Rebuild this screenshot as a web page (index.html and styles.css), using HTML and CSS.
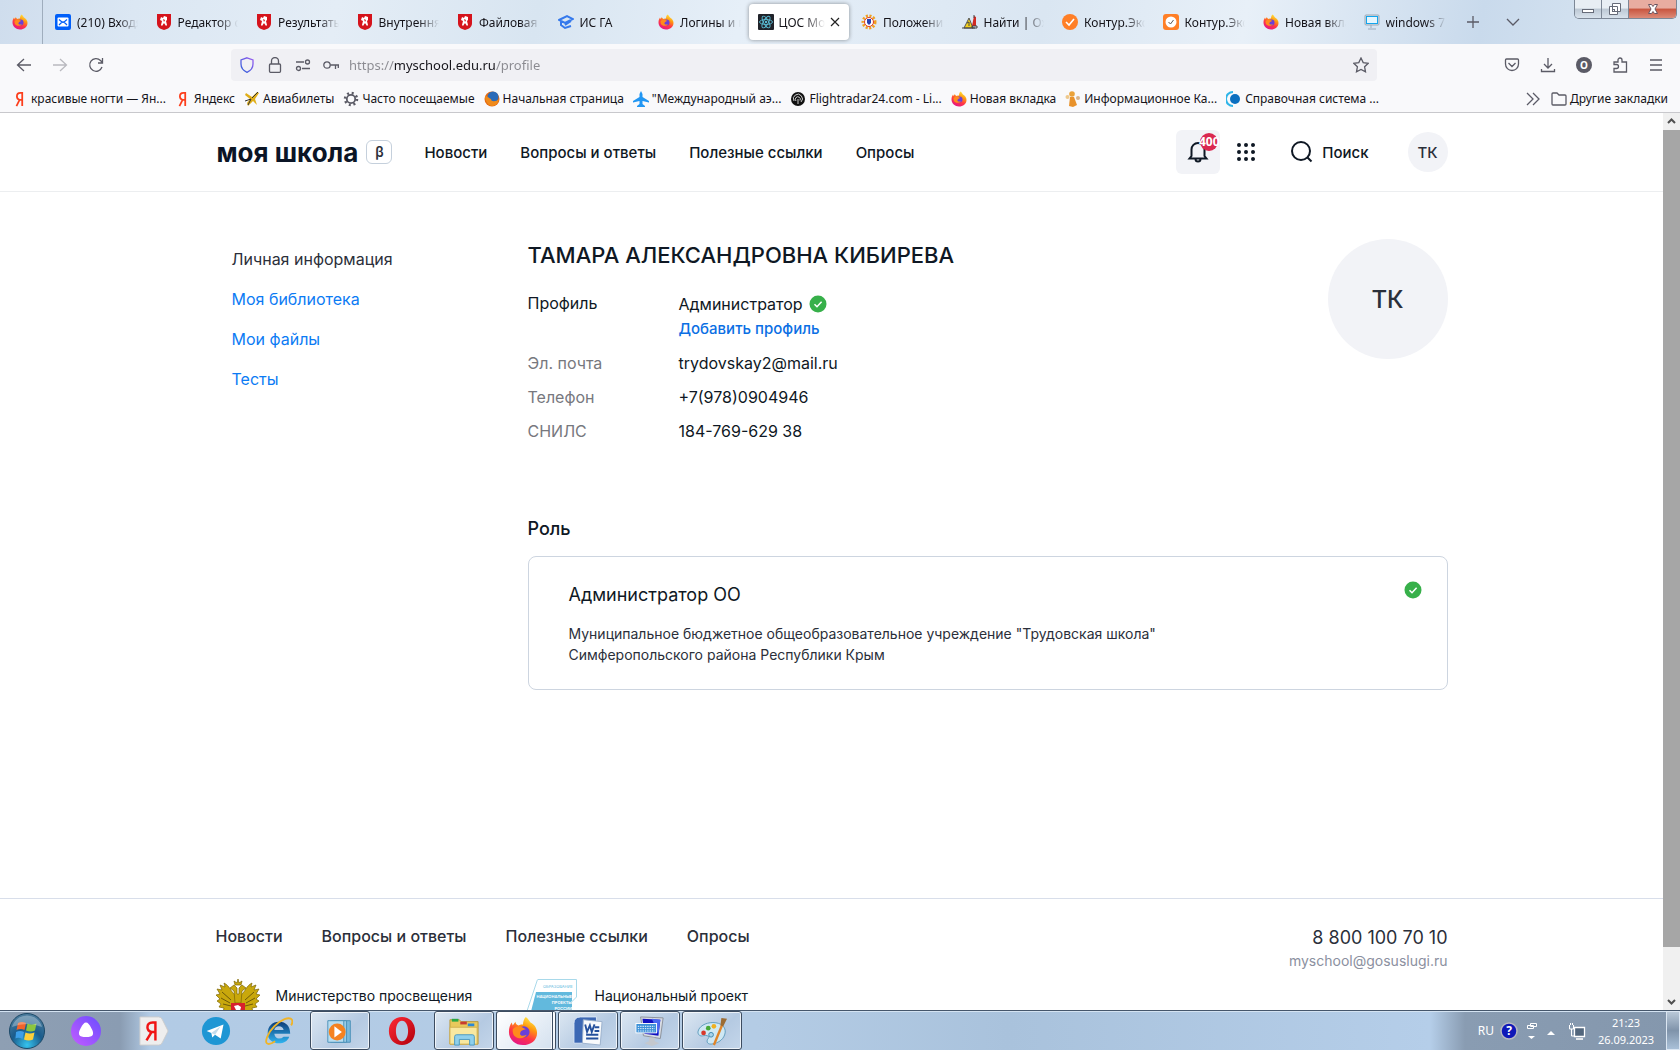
FILE: index.html
```html
<!DOCTYPE html>
<html lang="ru">
<head>
    <meta charset="UTF-8">
    <meta name="viewport" content="width=device-width, initial-scale=1.0">
    <title>ЦОС Моя школа</title>
    <link rel="stylesheet" href="styles.css">
</head>
<body>
    <!-- Icons -->
    <svg class="sprite" aria-hidden="true">
        <defs>
            <linearGradient id="fxBody" x1="0.8" y1="0" x2="0.3" y2="1">
                <stop offset="0" stop-color="#fff44f"/>
                <stop offset="0.35" stop-color="#ff980e"/>
                <stop offset="0.65" stop-color="#ff3647"/>
                <stop offset="1" stop-color="#e31587"/>
            </linearGradient>
            <linearGradient id="ieBody" x1="0" y1="0" x2="0" y2="1">
                <stop offset="0" stop-color="#0c3a78"/>
                <stop offset="1" stop-color="#2fb4ef"/>
            </linearGradient>
            <radialGradient id="orb" cx="0.5" cy="0.9" r="0.9">
                <stop offset="0" stop-color="#35c3ee"/>
                <stop offset="0.5" stop-color="#1a5c8c"/>
                <stop offset="1" stop-color="#4f7f9f"/>
            </radialGradient>
            <linearGradient id="alice" x1="0" y1="1" x2="1" y2="0">
                <stop offset="0" stop-color="#c45cff"/>
                <stop offset="1" stop-color="#6a4dff"/>
            </linearGradient>
            <linearGradient id="shieldLine" x1="0" y1="1" x2="1" y2="0">
                <stop offset="0" stop-color="#2a5fd8"/>
                <stop offset="1" stop-color="#9a5cf0"/>
            </linearGradient>
            <linearGradient id="operaRed" x1="0" y1="0" x2="1" y2="1">
                <stop offset="0" stop-color="#ff2a36"/>
                <stop offset="1" stop-color="#b0000c"/>
            </linearGradient>
        </defs>
        <symbol id="firefox" viewBox="0 0 32 32">
            <path d="M19 1c3 2 4 5 5 6 4 2 7 6 7 11 0 8-7 13-15 13S1 25 1 17c0-4 1-7 3-10l1 3 3-4c0 2 1 3 3 4 2-1 4-1 5-1 0-3 1-6 3-8z" fill="url(#fxBody)"/>
            <circle cx="17" cy="17" r="6" fill="#6a3fd8"/>
            <path d="M5 14c3-3 7-4 10-2l4 2c-3 1-5 1-6 4-1 3 3 4 7 2-2 4-8 5-12 2-3-2-3-5-3-8z" fill="#ff8a1c"/>
        </symbol>
        <symbol id="crest" viewBox="1 1 14 16">
            <path d="M1 1h14v9c0 4-3 6-7 7-4-1-7-3-7-7z" fill="#d5131c"/>
            <path d="M5 4l2 1 1-2 3 1v3l-1 1 1 4-1 1-2-3-2 3-1-1 1-4-2-1z" fill="#fff"/>
            <path d="M7 6l2 1-1 2z" fill="#d5131c"/>
        </symbol>
        <symbol id="yandex" viewBox="0 0 16 18">
            <path d="M10.500 17V2H8.500C6 2 4.500 3.500 4.500 6s1 3.500 3 4L4 17M7.500 10h3" fill="none" stroke="#fc3f1d" stroke-width="2"/>
        </symbol>
        <symbol id="check" viewBox="0 0 18 18">
            <circle cx="9" cy="9" r="8.500" fill="#37b04a"/>
            <path d="M5.500 9.200l2.500 2.500 4.600-5" fill="none" stroke="#fff" stroke-width="1.500"/>
        </symbol>
    </svg>

    <header class="browser">
        <div class="tab-strip">
            <button class="pinned-tab" aria-label="Firefox"><svg class="icon"><use href="#firefox"/></svg></button>
            <nav class="tabs">
                <button class="tab"><svg class="icon" viewBox="0 0 16 16"><rect width="16" height="16" rx="2" fill="#005ff9"/><rect x="2.500" y="3.500" width="11" height="9" rx="1" fill="#fff"/><path d="M4 5.500l3 2.500-3 3M12 5.500L9 8l3 3M6 9q2-2 4 0" fill="none" stroke="#005ff9" stroke-width="1.200"/></svg><span>(210) Входя</span></button>
                <button class="tab"><svg class="icon"><use href="#crest"/></svg><span>Редактор с</span></button>
                <button class="tab"><svg class="icon"><use href="#crest"/></svg><span>Результаты</span></button>
                <button class="tab"><svg class="icon"><use href="#crest"/></svg><span>Внутрення</span></button>
                <button class="tab"><svg class="icon"><use href="#crest"/></svg><span>Файловая с</span></button>
                <button class="tab"><svg class="icon" viewBox="0 0 16 16" fill="none" stroke="#3579ec" stroke-width="2"><path d="M1 6l8-4 6 3-8 4zM3 7v4l4 3 6-2M13 7l-6 4"/></svg><span>ИС ГА</span></button>
                <button class="tab"><svg class="icon"><use href="#firefox"/></svg><span>Логины и п</span></button>
                <button class="tab active"><svg class="icon" viewBox="0 0 16 16"><rect width="16" height="16" rx="1" fill="#20232a"/><g fill="none" stroke="#5bbdd5" stroke-width="0.900"><ellipse cx="8" cy="8" rx="6.500" ry="2.500"/><ellipse cx="8" cy="8" rx="6.500" ry="2.500" transform="rotate(60 8 8)"/><ellipse cx="8" cy="8" rx="6.500" ry="2.500" transform="rotate(120 8 8)"/></g><circle cx="8" cy="8" r="1.200" fill="#5bbdd5"/></svg><span>ЦОС Мо</span><svg class="close" viewBox="0 0 10 10"><path d="M1 1l8 8M9 1L1 9" stroke="#222" stroke-width="1.200"/></svg></button>
                <button class="tab"><svg class="icon" viewBox="0 0 16 16"><circle cx="8" cy="8" r="6" fill="none" stroke="#f0a020" stroke-width="3" stroke-dasharray="2 1.500"/><circle cx="8" cy="8" r="4.500" fill="#fff" stroke="#e03a20"/><path d="M6 5h4v4l-2 2-2-2z" fill="#2840b0"/></svg><span>Положени</span></button>
                <button class="tab"><svg class="icon" viewBox="0 0 16 16"><path d="M2 14L7 4l4 10z" fill="#f5d21c" stroke="#555"/><path d="M10 12L12 2l2 1v9z" fill="#d22a22"/><path d="M10 14h5v-2h-5zM12 4V1M5 9l2-1v4M0 14h13" stroke="#444" fill="none"/></svg><span>Найти | Ох</span></button>
                <button class="tab"><svg class="icon" viewBox="0 0 16 16"><circle cx="8" cy="8" r="8" fill="#ff7f27"/><path d="M4 8l3 3 5-6" fill="none" stroke="#fff" stroke-width="1.600"/></svg><span>Контур.Экс</span></button>
                <button class="tab"><svg class="icon" viewBox="0 0 16 16"><rect width="16" height="16" rx="3" fill="#ff7f27"/><circle cx="8" cy="8" r="5.500" fill="#fff"/><path d="M5.500 8l2 2 3-4" fill="none" stroke="#555"/></svg><span>Контур.Экс</span></button>
                <button class="tab"><svg class="icon"><use href="#firefox"/></svg><span>Новая вкла</span></button>
                <button class="tab"><svg class="icon" viewBox="0 0 16 16"><rect x="1" y="1" width="14" height="10" rx="1" fill="#ddd" stroke="#9ab"/><rect x="2.500" y="2.500" width="11" height="7" fill="#e4f6ff" stroke="#12a5ee"/><path d="M7 11v3M4 15h8" stroke="#9ab"/></svg><span>windows 7</span></button>
            </nav>
            <div class="tab-tools">
                <button class="tool" aria-label="Новая вкладка"><svg viewBox="0 0 16 16"><path d="M8 2v12M2 8h12"/></svg></button>
                <button class="tool" aria-label="Все вкладки"><svg viewBox="0 0 16 16"><path d="M2 5l6 6 6-6"/></svg></button>
            </div>
            <div class="window-controls">
                <button aria-label="Свернуть"><svg viewBox="0 0 16 14"><rect x="2.500" y="7.500" width="11" height="3" fill="#fff" stroke="#666b78"/></svg></button>
                <button aria-label="Развернуть"><svg viewBox="0 0 16 14"><path d="M5.500 1.500h8v8h-8zM2.500 4.500h8v8h-8z" fill="#fff" stroke="#666b78"/><rect x="5.500" y="7.500" width="2" height="2" fill="none" stroke="#666b78"/></svg></button>
                <button class="win-close" aria-label="Закрыть"><svg viewBox="0 0 16 14"><path d="M3.500 2.500h3l1.500 2 1.500-2h3L10 7l2.500 4.500h-3L8 9.500l-1.500 2h-3L6 7z" fill="#fff" stroke="#6b5560"/></svg></button>
            </div>
        </div>

        <div class="toolbar">
            <div class="nav-buttons">
                <button class="tool" aria-label="Назад"><svg viewBox="0 0 16 16"><path d="M15 8H1.500M8 2L1.500 8 8 14"/></svg></button>
                <button class="tool disabled" aria-label="Вперёд"><svg viewBox="0 0 16 16"><path d="M1 8h13.500M8 2l6.500 6L8 14"/></svg></button>
                <button class="tool" aria-label="Обновить"><svg viewBox="0 0 16 16"><path d="M14 10a6.300 6.300 0 1 1-1.500-6.500L14.500 5.500M14.500 1v5H10"/></svg></button>
            </div>
            <div class="url-bar">
                <svg class="icon" viewBox="0 0 16 16" fill="none" stroke="url(#shieldLine)" stroke-width="1.300"><path d="M8 .800L14 3v4c0 4-2 6.500-6 8.300C4 13.500 2 11 2 7V3z"/></svg>
                <svg class="icon line" viewBox="0 0 16 16"><rect x="2.500" y="7" width="11" height="8.300" rx="1"/><path d="M4.500 7V4a3.500 3.500 0 0 1 7 0v3"/></svg>
                <svg class="icon line" viewBox="0 0 16 16"><path d="M1 5h8M7 11.500h8"/><circle cx="12.500" cy="5" r="2"/><circle cx="3.500" cy="11.500" r="2"/></svg>
                <svg class="icon line" viewBox="0 0 16 16"><circle cx="4" cy="8" r="3.200"/><path d="M7.200 8H16M12.500 8v4M15.300 8v3"/></svg>
                <input type="text" class="url" aria-label="Адрес" value="https://myschool.edu.ru/profile">
                <svg class="icon line" viewBox="0 0 16 16"><path d="M8 1l2.200 4.600 5 .700-3.600 3.500.900 5L8 12.400l-4.500 2.400.900-5L.800 6.300l5-.700z"/></svg>
            </div>
            <div class="ext-buttons">
                <button class="tool" aria-label="Pocket"><svg viewBox="0 0 16 16"><path d="M2.500 2h11q1 0 1 1v4a6.500 6.500 0 0 1-13 0V3q0-1 1-1zM4.500 6L8 9.500 11.500 6"/></svg></button>
                <button class="tool" aria-label="Загрузки"><svg viewBox="0 0 16 16"><path d="M8 1v10M4 7l4 4 4-4M1.500 12v2.500h13V12"/></svg></button>
                <button class="account" aria-label="Аккаунт">O</button>
                <button class="tool" aria-label="Расширения"><svg viewBox="0 0 16 16"><path d="M2 15V11.500h2.500a1.500 1.500 0 0 0 0-4H2V5h4V3a2 2 0 0 1 4 0v2h4.500v10z"/></svg></button>
                <button class="tool" aria-label="Меню"><svg viewBox="0 0 16 16"><path d="M2 3h12M2 8h12M2 13h12"/></svg></button>
            </div>
        </div>

        <nav class="bookmarks">
            <a href="#"><svg class="icon"><use href="#yandex"/></svg>красивые ногти — Ян...</a>
            <a href="#"><svg class="icon"><use href="#yandex"/></svg>Яндекс</a>
            <a href="#"><svg class="icon" viewBox="0 0 16 16"><path d="M2 2l6 4 5-5 2 1-4 6 2 6-4-4-5 5-1-3 3-4-5-4z" fill="#e0ae18"/><path d="M1 10l6-2-3 6M14 1l-6 6" stroke="#333" fill="none"/></svg>Авиабилеты</a>
            <a href="#"><svg class="icon" viewBox="0 0 16 16" fill="none" stroke="#5b5b66"><circle cx="8" cy="8" r="4.200" stroke-width="1.800"/><circle cx="8" cy="8" r="6" stroke-width="2.500" stroke-dasharray="2 2.710"/></svg>Часто посещаемые</a>
            <a href="#"><svg class="icon" viewBox="0 0 16 16"><circle cx="8" cy="8" r="7.500" fill="#e66a12"/><circle cx="9" cy="6" r="5.500" fill="#2b6bb8"/><path d="M1 5c3 0 3 2 6 3 0 3 5 3 8 0-1 5-4 7-7 7S1 11 1 5z" fill="#f08a1a"/></svg>Начальная страница</a>
            <a href="#"><svg class="icon" viewBox="0 0 16 16"><path d="M8 0l1.500 3v3L16 10v1.500L9.500 10v3L12 15v1H4v-1l2.500-2v-3L0 11.500V10l6.500-4V3z" fill="#2196f3"/></svg>"Международный аэ...</a>
            <a href="#"><svg class="icon" viewBox="0 0 16 16"><circle cx="8" cy="8" r="7" fill="#111"/><path d="M4 10a4.500 4.500 0 1 1 7 1M6 10a2.500 2.500 0 1 1 4-.500M8 8v5" fill="none" stroke="#ccc"/></svg>Flightradar24.com - Li...</a>
            <a href="#"><svg class="icon"><use href="#firefox"/></svg>Новая вкладка</a>
            <a href="#"><svg class="icon" viewBox="0 0 16 16"><circle cx="7" cy="3" r="2.800" fill="#eaa23a"/><path d="M5 6h4l3 8-4 2-4-1z" fill="#e8922c"/><circle cx="2.500" cy="6" r="2" fill="#eec88c"/><circle cx="13" cy="7" r="2" fill="#d9b48a"/></svg>Информационное Ка...</a>
            <a href="#"><svg class="icon" viewBox="0 0 16 16"><circle cx="9" cy="8" r="5" fill="#0a6fc0"/><path d="M7 1a7 7 0 0 0 0 14" fill="none" stroke="#2fb5e8" stroke-width="2"/></svg>Справочная система ...</a>
            <div class="bookmarks-end">
                <button class="tool" aria-label="Ещё"><svg viewBox="0 0 16 16"><path d="M2 2l6 6-6 6M8 2l6 6-6 6"/></svg></button>
                <a href="#"><svg class="icon line" viewBox="0 0 16 16"><path d="M1 3q0-1 1-1h4l2 2h6q1 0 1 1v8q0 1-1 1H2q-1 0-1-1z"/></svg>Другие закладки</a>
            </div>
        </nav>
    </header>

    <div class="viewport">
        <div class="page">
            <header class="site-header">
                <div class="container">
                    <a class="logo" href="#">моя школа</a>
                    <span class="beta">β</span>
                    <nav class="site-nav">
                        <a href="#">Новости</a>
                        <a href="#">Вопросы и ответы</a>
                        <a href="#">Полезные ссылки</a>
                        <a href="#">Опросы</a>
                    </nav>
                    <div class="site-actions">
                        <button class="bell" aria-label="Уведомления">
                            <svg viewBox="0 0 24 24"><path d="M3.500 18.500h17L18.500 16V9.500a6.500 6.500 0 0 0-13 0V16zM9.500 19a2.500 2.500 0 0 0 5 0"/></svg>
                            <span class="badge">400</span>
                        </button>
                        <button class="apps" aria-label="Сервисы">
                            <svg viewBox="0 0 18 18"><path d="M2 2h.010M9 2h.010M16 2h.010M2 9h.010M9 9h.010M16 9h.010M2 16h.010M9 16h.010M16 16h.010"/></svg>
                        </button>
                        <button class="search"><svg viewBox="0 0 24 24"><circle cx="11" cy="11" r="9"/><path d="M17.500 17.500l4 4"/></svg>Поиск</button>
                        <button class="avatar">ТК</button>
                    </div>
                </div>
            </header>

            <main class="container main">
                <nav class="side-menu">
                    <a class="current" href="#">Личная информация</a>
                    <a href="#">Моя библиотека</a>
                    <a href="#">Мои файлы</a>
                    <a href="#">Тесты</a>
                </nav>
                <section class="content">
                    <div class="profile">
                        <div class="profile-info">
                            <h1>ТАМАРА АЛЕКСАНДРОВНА КИБИРЕВА</h1>
                            <dl>
                                <dt class="dark">Профиль</dt>
                                <dd>
                                    <span class="role-name">Администратор <svg class="check"><use href="#check"/></svg></span>
                                    <a class="add-profile" href="#">Добавить профиль</a>
                                </dd>
                                <dt>Эл. почта</dt>
                                <dd>trydovskay2@mail.ru</dd>
                                <dt>Телефон</dt>
                                <dd>+7(978)0904946</dd>
                                <dt>СНИЛС</dt>
                                <dd>184-769-629 38</dd>
                            </dl>
                        </div>
                        <div class="avatar avatar-big">ТК</div>
                    </div>
                    <h2>Роль</h2>
                    <article class="role-card">
                        <div>
                            <h3>Администратор ОО</h3>
                            <p>Муниципальное бюджетное общеобразовательное учреждение "Трудовская школа"<br>Симферопольского района Республики Крым</p>
                        </div>
                        <svg class="check"><use href="#check"/></svg>
                    </article>
                </section>
            </main>

            <footer class="site-footer">
                <div class="container">
                    <div class="footer-top">
                        <nav class="footer-nav">
                            <a href="#">Новости</a>
                            <a href="#">Вопросы и ответы</a>
                            <a href="#">Полезные ссылки</a>
                            <a href="#">Опросы</a>
                        </nav>
                        <div class="contacts">
                            <a class="phone" href="tel:88001007010">8 800 100 70 10</a>
                            <a class="mail" href="mailto:myschool@gosuslugi.ru">myschool@gosuslugi.ru</a>
                        </div>
                    </div>
                    <div class="partners">
                        <a href="#">
                            <svg class="emblem" viewBox="0 0 44 48"><g fill="#c9a80c" stroke="#7c6504" stroke-width="0.700"><path d="M19 16C15 13 14 7 8 4l1 4-5-2 2 5-5-1 3 5-4 1 4 4-3 2 4 3-2 3 5 1-1 4 6-1 3 5 5-5z"/><path d="M25 16c4-3 5-9 11-12l-1 4 5-2-2 5 5-1-3 5 4 1-4 4 3 2-4 3 2 3-5 1 1 4-6-1-3 5-5-5z"/><path d="M14 9l4-3 3 3v6h2V9l3-3 4 3-4 3-1 12h-6l-1-12z"/><path d="M19 6l-1-4 3 2 1-4 1 4 3-2-1 4z"/><path d="M15 34h14l-3 12h-8z"/></g><path d="M6 13l9 8M5 19l9 5M7 25l8 2M38 13l-9 8M39 19l-9 5M37 25l-8 2" stroke="#6e5a08"/><path d="M15 24h14v10l-7 5-7-5z" fill="#d8202c"/><path d="M18 27l4-1 3 2-1 4 2 3-4-2-4 2 2-4z" fill="#fff"/></svg>
                            Министерство просвещения
                        </a>
                        <a href="#">
                            <svg class="emblem wide" viewBox="0 0 52 48"><path d="M11 .500h38.500V18l-5 5M10.500.500L0 32" fill="none" stroke="#a8d9ea"/><path d="M9 13h36v35H0z" fill="#62b9dd"/><text x="16" y="9" class="emblem-top">ОБРАЗОВАНИЕ</text><text x="45" y="19" class="emblem-text">НАЦИОНАЛЬНЫЕ</text><text x="45" y="25" class="emblem-text">ПРОЕКТЫ</text><text x="45" y="31" class="emblem-text">РОССИИ</text></svg>
                            Национальный проект
                        </a>
                    </div>
                </div>
            </footer>
        </div>
        <div class="scrollbar">
            <svg viewBox="0 0 17 17"><path d="M5 10l3.500-3.500L12 10"/></svg>
            <div class="thumb"></div>
            <svg viewBox="0 0 17 17"><path d="M5 7l3.500 3.500L12 7"/></svg>
        </div>
    </div>

    <footer class="taskbar">
        <button class="start" aria-label="Пуск"><svg viewBox="0 0 36 36"><circle cx="18" cy="18" r="17.500" fill="url(#orb)" stroke="#1d4a68"/><path d="M9 10q4-2 8 0l-1.500 7q-4-2-8 0z" fill="#f0642c"/><path d="M18.500 10.500q4 2 9 0L26 17.500q-4 2-9 0z" fill="#8cc63e"/><path d="M7 19q4-2 8 0l-1.500 7q-4-2-7-.500z" fill="#3c9fe8"/><path d="M16.500 19.500q4 2 9 0L24 26.500q-4 2-9 0z" fill="#fcd03a"/><path d="M3 14a15.500 15.500 0 0 1 30 0Q18 8 3 14z" fill="#fff" opacity="0.300"/></svg></button>
        <div class="tasks">
            <button class="task alice" aria-label="Алиса"><svg viewBox="0 0 32 32"><circle cx="16" cy="16" r="16" fill="url(#alice)"/><path d="M16 7c2 0 3.500 2 6 6.500 3 5.500 2 9-6 9s-9-3.500-6-9C12.500 9 14 7 16 7z" fill="#fff"/></svg></button>
            <button class="task" aria-label="Яндекс"><svg viewBox="0 0 32 32"><path d="M1 1h20q3 0 4 3l6 12-6 12q-1 3-4 3H1z" fill="#eee" stroke="#ccc"/><path d="M17.500 26V7h-3c-4 0-5.500 2-5.500 5s1.500 4.500 4.500 5L8 26M12 17h5.500" fill="none" stroke="#f01414" stroke-width="2.600"/></svg></button>
            <button class="task" aria-label="Telegram"><svg viewBox="0 0 32 32"><circle cx="16" cy="16" r="15" fill="#1e96d4"/><path d="M6 16l18-7-3 15-6-4-3 3-1-5z" fill="#fff"/><path d="M11 18l10-7-6 9" fill="#c3dcec"/></svg></button>
            <button class="task" aria-label="Internet Explorer"><svg viewBox="0 0 32 32"><path d="M29 19H12q1 5 5 5 3 0 5-2h6c-2 5-6 7-11 7-7 0-12-4-12-11S10 6 17 6c8 0 12 5 12 13zM12 15h10q-1-4-5-4t-5 4z" fill="url(#ieBody)"/><path d="M31 4c-3-4-12 0-19 7S2 27 4 29s6 0 9-2M31 4q1 3-1 6" fill="none" stroke="#f0b428" stroke-width="2"/></svg></button>
            <button class="task open" aria-label="Проигрыватель"><svg viewBox="0 0 32 32"><path d="M10 5h17v23H10z" fill="#7ab9dc" stroke="#4a90b8"/><path d="M6 5h17v23H6z" fill="#9ccde6" stroke="#4a90b8"/><path d="M3 5h17v23H3z" fill="#b8ddf0" stroke="#4a90b8"/><circle cx="13" cy="17" r="9" fill="#f58220"/><path d="M10 11l8 6-8 6z" fill="#fff"/></svg></button>
            <button class="task" aria-label="Opera"><svg viewBox="0 0 32 32"><path d="M16 1c8 0 14 6 14 15s-6 15-14 15S2 25 2 16 8 1 16 1zm0 4c-4 0-6.500 5-6.500 11S12 27 16 27s6.500-5 6.500-11S20 5 16 5z" fill="url(#operaRed)" fill-rule="evenodd"/></svg></button>
            <button class="task open" aria-label="Проводник"><svg viewBox="0 0 32 32"><path d="M1 4h10l2 2h18v24H1z" fill="#e8c95c" stroke="#b8963a"/><path d="M3 3h7v3H3z" fill="#2aa844"/><path d="M12 6h7v3h-7z" fill="#c83c30"/><path d="M20 8h7v3h-7z" fill="#2a88d8"/><path d="M1 12h29v18H1z" fill="#f8e8a0" stroke="#d0b050"/><path d="M6 31v-9q0-2 2-2h17q2 0 2 2v9h-5v-6H11v6z" fill="#8fd0ec" stroke="#4898c0"/></svg></button>
            <button class="task open stacked" aria-label="Firefox"><svg><use href="#firefox"/></svg></button>
            <button class="task open" aria-label="Word"><svg viewBox="0 0 32 32"><path d="M8 1h17v28H1V8q0-7 7-7z" fill="#3c68b4" stroke="#dce8f8"/><path d="M11 4l20 2-2 25-19-2z" fill="#f8fafc" stroke="#9ab0cc"/><path d="M13 9l2 8 3-7 2 7 3-8" fill="none" stroke="#24509c" stroke-width="2"/><path d="M23 12h5M23 16h5M14 20h13M14 24h13" stroke="#24509c" stroke-width="2"/></svg></button>
            <button class="task open" aria-label="Экранная клавиатура"><svg viewBox="0 0 32 32"><path d="M6 1l24 1-3 22-18-3z" fill="#d8dce4" stroke="#8a8f98"/><path d="M8 3l19 1-2 17-15-2z" fill="#1010c0"/><path d="M18 3l9 1-2 16z" fill="#4868f0"/><rect x="1" y="8" width="22" height="10" fill="#3a90d8" stroke="#fff"/><path d="M3 11h18M3 13.500h18M3 16h18" stroke="#fff" stroke-dasharray="1.500 1"/><path d="M15 23h6v4l5 2-8 3-8-3 5-2z" fill="#c4c8ce"/></svg></button>
            <button class="task open" aria-label="Paint"><svg viewBox="0 0 32 32"><path d="M17 7c9 0 14 5 13 11s-6 11-15 12c-5 0-5-4-3-6s-1-4-5-3-6-1-6-4C2 11 9 7 17 7z" fill="#cfe8f4" stroke="#5c9abc"/><circle cx="7" cy="18" r="2.500" fill="#d8382c"/><circle cx="12" cy="13" r="2.500" fill="#48a838"/><circle cx="18" cy="11" r="2.500" fill="#f0b020"/><circle cx="15" cy="20" r="2.500" fill="#a8d4ec" stroke="#3c88b0"/><path d="M27 9L18 31" stroke="#e08428" stroke-width="2.500"/><path d="M25 10l1-8 6 1-4 8z" fill="#9c6c34"/></svg></button>
        </div>
        <div class="tray">
            <span class="lang">RU</span>
            <svg class="help" viewBox="0 0 18 18"><circle cx="9" cy="9" r="8" fill="#1018b8" stroke="#b8b8c0" stroke-width="1.500"/><text x="9" y="13">?</text></svg>
            <svg class="lang-tools" viewBox="0 0 10 18"><path d="M3.500 1.500h6v3h-6zM.500 3.500h6v3h-6z" fill="#7f93aa" stroke="#fff"/><path d="M1 14h7l-3.500 3z" fill="#fff"/></svg>
            <svg class="arrow" viewBox="0 0 10 18"><path d="M1 13h8L5 9z" fill="#fff"/></svg>
            <svg class="network" viewBox="0 0 18 18"><path d="M6.500 5.500h10v9h-10zM8 17h7" fill="#52667c" stroke="#fff" stroke-width="1.300"/><path d="M1.500 3v4h4V3M2.500 1v2M4.500 1v2M3.500 7v7h3" fill="none" stroke="#fff"/></svg>
            <time class="clock">21:23<br>26.09.2023</time>
            <button class="show-desktop" aria-label="Свернуть все окна"></button>
        </div>
    </footer>
</body>
</html>
```
FILE: styles.css
```css
* {
    box-sizing: border-box;
}

body {
    margin: 0;
    height: 100vh;
    display: flex;
    flex-direction: column;
    overflow: hidden;
    background: #fff;
    font-family: Inter, "Noto Sans", sans-serif;
    font-size: 16px;
    color: #0f1824;
}

button {
    border: none;
    background: none;
    padding: 0;
    margin: 0;
    font: inherit;
    color: inherit;
    cursor: pointer;
}

a {
    color: inherit;
    text-decoration: none;
}

svg {
    flex: none;
    display: block;
}

.sprite {
    position: absolute;
    width: 0;
    height: 0;
}

.icon {
    width: 16px;
    height: 16px;
}

.line,
.tool svg {
    fill: none;
    stroke: #5b5b66;
    stroke-width: 1.3;
}

/* Browser window */
.browser {
    flex: none;
    font-family: "Noto Sans", "Open Sans", sans-serif;
    font-size: 12px;
    color: #15141a;
    background: #f9f9fb;
    border-bottom: 1px solid #c8c8cc;
}

.tab-strip {
    display: flex;
    height: 44px;
    background: linear-gradient(100deg, #cfdded 0%, #dbe7f3 8%, #e4edf6 20%, #d8e5f1 32%, #e6eff8 44%, #dae6f2 62%, #e8f0f8 74%, #c9daec 88%, #dce8f3 100%);
}

.pinned-tab {
    width: 43px;
    padding-left: 12px;
    border-right: 1px solid #9fadbd;
}

.tabs {
    flex: 1;
    display: flex;
    min-width: 0;
    padding-left: 1px;
}

.tab {
    flex: 1;
    min-width: 0;
    display: flex;
    align-items: center;
    gap: 6px;
    margin: 4px 1px;
    padding: 0 6px 0 10px;
    border-radius: 4px;
    text-align: left;
}

.tab span {
    flex: 1;
    overflow: hidden;
    white-space: nowrap;
    mask-image: linear-gradient(to left, transparent, #000 20px);
}

.tab.active {
    gap: 5px;
    padding: 0 9px;
    background: #fff;
    box-shadow: 0 0 4px rgba(0, 0, 0, 0.4);
}

.close {
    width: 10px;
    height: 10px;
}

.tab-tools {
    display: flex;
    width: 121px;
}

.tool {
    display: flex;
    align-items: center;
    justify-content: center;
    width: 36px;
    height: 100%;
}

.tool svg {
    width: 16px;
    height: 16px;
}

.tab-tools .tool {
    width: 40px;
}

.tool.disabled {
    opacity: 0.4;
}

.window-controls {
    display: flex;
    width: 103px;
    height: 19px;
    margin-right: 3px;
    border: 1px solid #7c8796;
    border-top: none;
    border-radius: 0 0 5px 5px;
    overflow: hidden;
}

.window-controls button {
    flex: 1;
    display: flex;
    align-items: center;
    justify-content: center;
    border-right: 1px solid #7c8796;
    background: linear-gradient(#e8eef4 45%, #bcc8d4 50%, #d8e2ec);
}

.window-controls .win-close {
    flex: none;
    width: 47px;
    border-right: none;
    background: linear-gradient(#e8aca0 45%, #c8553f 50%, #dd8b78);
}

.window-controls svg {
    width: 16px;
    height: 14px;
}

.toolbar {
    display: flex;
    align-items: center;
    height: 41px;
}

.nav-buttons {
    display: flex;
    width: 231px;
    padding-left: 6px;
}

.url-bar {
    flex: 1;
    display: flex;
    align-items: center;
    gap: 12px;
    height: 32px;
    padding: 0 8px;
    border-radius: 4px;
    background: #f0f0f4;
}

/* host name is darker than the rest of the address */
.url {
    flex: 1;
    min-width: 0;
    margin-left: -2px;
    border: none;
    padding: 0;
    outline: none;
    font-family: "Noto Sans", sans-serif;
    font-size: 13px;
    color: transparent;
    background: linear-gradient(to right, #8a8a90 45px, #15141a 45px, #15141a 147px, #8a8a90 147px);
    background-clip: text;
}

.ext-buttons {
    display: flex;
    align-items: center;
    padding-left: 117px;
    padding-right: 6px;
}

.account {
    width: 16px;
    height: 16px;
    margin: 0 10px;
    border-radius: 50%;
    background: #5b5b66;
    color: #fff;
    font-size: 10px;
    font-weight: 700;
    line-height: 16px;
}

.bookmarks {
    display: flex;
    align-items: center;
    gap: 9px;
    height: 27px;
    padding: 0 12px;
    white-space: nowrap;
}

.bookmarks a {
    display: flex;
    align-items: center;
    gap: 3px;
}

.bookmarks-end {
    display: flex;
    align-items: center;
    margin-left: auto;
}

/* Page area */
.viewport {
    flex: 1;
    min-height: 0;
    display: flex;
}

.page {
    flex: 1;
    overflow: hidden;
}

.container {
    max-width: 1232px;
    margin: 0 auto;
}

.site-header {
    border-bottom: 1px solid #eceef0;
}

.site-header .container {
    display: flex;
    align-items: center;
    height: 78px;
}

.logo {
    padding-left: 1px;
    font-size: 26px;
    font-weight: 700;
    color: #0b1526;
}

.beta {
    width: 26px;
    height: 24px;
    margin-left: 8px;
    border: 1px solid #c5d0dc;
    border-radius: 6px;
    font-size: 14px;
    font-weight: 600;
    line-height: 22px;
    text-align: center;
    color: #2b2f3a;
}

.site-nav {
    display: flex;
    gap: 33px;
    margin-left: 32px;
    font-size: 15px;
    font-weight: 500;
}

.site-actions {
    display: flex;
    align-items: center;
    margin-left: auto;
    font-size: 15px;
    font-weight: 500;
}

.site-actions svg {
    width: 24px;
    height: 24px;
    fill: none;
    stroke: #0f1824;
    stroke-width: 2;
}

.bell {
    position: relative;
    width: 44px;
    height: 44px;
    padding: 0 10px;
    border-radius: 6px;
    background: #f2f3f7;
}

.badge {
    position: absolute;
    top: 3px;
    right: 2px;
    width: 18px;
    height: 18px;
    display: flex;
    justify-content: center;
    border-radius: 50%;
    background: #da2850;
    color: #fff;
    font-family: "Noto Sans", sans-serif;
    font-size: 12px;
    font-weight: 700;
    line-height: 18px;
}

.apps {
    margin-left: 17px;
}

.site-actions .apps svg {
    width: 18px;
    height: 18px;
    stroke-width: 4;
    stroke-linecap: round;
}

.search {
    display: flex;
    align-items: center;
    gap: 8px;
    margin-left: 35px;
}

.avatar {
    display: flex;
    align-items: center;
    justify-content: center;
    width: 40px;
    height: 40px;
    margin-left: 39px;
    border-radius: 50%;
    background: #f2f3f7;
    color: #2b2f3a;
    font-weight: 500;
}

.avatar-big {
    width: 120px;
    height: 120px;
    font-size: 24px;
}

.main {
    display: flex;
    min-height: 706px;
    padding-top: 47px;
}

.side-menu {
    display: flex;
    flex-direction: column;
    width: 312px;
    padding-left: 16px;
    font-size: 16px;
    line-height: 40px;
    color: #0b7bf4;
}

.side-menu .current {
    color: #2b2f3a;
}

.content {
    flex: 1;
}

.profile {
    display: flex;
    justify-content: space-between;
}

h1,
h2,
h3,
p,
dl,
dd {
    margin: 0;
}

h1 {
    font-size: 22px;
    font-weight: 500;
    line-height: 32px;
}

dl {
    display: grid;
    grid-template-columns: 151px auto;
    row-gap: 10px;
    margin-top: 20px;
    line-height: 24px;
}

dt {
    color: #77787e;
}

dt.dark {
    color: #0f1824;
}

.role-name {
    display: flex;
    align-items: center;
    gap: 6px;
    line-height: 26px;
}

.check {
    width: 18px;
    height: 18px;
}

.add-profile {
    display: block;
    font-size: 15px;
    font-weight: 500;
    line-height: 24px;
    color: #0b6fe4;
}

h2 {
    margin-top: 74px;
    font-size: 18px;
    font-weight: 500;
    line-height: 24px;
}

.role-card {
    display: flex;
    justify-content: space-between;
    margin-top: 15px;
    padding: 24px 25px 24px 40px;
    border: 1px solid #cdd5e0;
    border-radius: 8px;
}

.role-card h3 {
    font-size: 18px;
    font-weight: 400;
    line-height: 28px;
}

.role-card p {
    margin-top: 14px;
    font-size: 14px;
    line-height: 21px;
    color: #2b2f3a;
}

.site-footer {
    border-top: 1px solid #d8deea;
}

.footer-top {
    display: flex;
    justify-content: space-between;
    padding-top: 26px;
}

.footer-nav {
    display: flex;
    gap: 39px;
    font-size: 16px;
    font-weight: 500;
    line-height: 22px;
    color: #2b2f3a;
}

.contacts {
    display: flex;
    flex-direction: column;
    text-align: right;
}

.phone {
    font-size: 18px;
    line-height: 26px;
    color: #2b2f3a;
}

.mail {
    font-size: 14px;
    line-height: 20px;
    color: #8b90a0;
}

.partners {
    display: flex;
    margin-top: 8px;
    font-size: 14px;
}

.partners a {
    display: flex;
    gap: 16px;
    width: 311px;
    line-height: 34px;
}

.emblem {
    width: 44px;
    height: 48px;
}

.emblem.wide {
    width: 52px;
}

.emblem-top {
    font-size: 4px;
    fill: #62b9dd;
}

.emblem-text {
    font-size: 4px;
    font-weight: 600;
    text-anchor: end;
    fill: #fff;
}

.scrollbar {
    display: flex;
    flex-direction: column;
    width: 17px;
    background: #f0f0f0;
}

.scrollbar svg {
    width: 17px;
    height: 17px;
    fill: none;
    stroke: #505050;
    stroke-width: 2;
}

.thumb {
    flex: 0 1 817px;
    margin-bottom: auto;
    background: #a6a6a6;
}

/* Windows taskbar */
.taskbar {
    flex: none;
    display: flex;
    height: 40px;
    border-top: 1px solid #45566b;
    box-shadow: inset 0 1px #d4e3f2;
    background: linear-gradient(to right, #8e9fb3 0, #8a9cb2 120px, #b2cbe5 150px, #b4cce5 45%, #a9c2dc 60%, #b5cee9 1430px, #899cb2 1465px, #8497ad 100%);
    font-family: "Noto Sans", sans-serif;
    font-size: 12px;
    color: #fff;
}

.start {
    width: 54px;
    padding: 0 9px;
}

.start svg {
    width: 36px;
    height: 36px;
}

.tasks {
    display: flex;
    gap: 2px;
    margin-left: 2px;
}

.task {
    width: 60px;
    padding: 0 15px;
    border-radius: 3px;
}

.task svg {
    width: 30px;
    height: 30px;
}

.alice {
    margin-right: 6px;
}

.task.open {
    padding: 0 14px;
    border: 1px solid #3c4c60;
    box-shadow: inset 0 0 0 1px rgba(255, 255, 255, 0.7);
    background: linear-gradient(135deg, #dce7f2, #b5cae2 60%, #c4d6ea);
}

.task.stacked {
    padding: 0 11px;
    border-right-width: 4px;
    border-right-style: double;
    background: linear-gradient(135deg, #fff, #d4e1ef);
}

.tray {
    display: flex;
    align-items: center;
    margin-left: auto;
    font-size: 11px;
}

.lang {
    font-size: 12px;
}

.help {
    width: 18px;
    height: 18px;
    margin-left: 6px;
}

.help text {
    fill: #fff;
    font-size: 12px;
    font-weight: 700;
    text-anchor: middle;
}

.lang-tools,
.arrow {
    width: 10px;
    height: 18px;
    margin-left: 9px;
}

.network {
    width: 18px;
    height: 18px;
    margin-left: 12px;
}

.clock {
    width: 80px;
    line-height: 17px;
    text-align: center;
}

.show-desktop {
    width: 14px;
    height: 39px;
    border: 1px solid #dbe6f2;
    background: linear-gradient(#b9c8d8, #7f93aa 50%, #a9c0d8);
}
```
